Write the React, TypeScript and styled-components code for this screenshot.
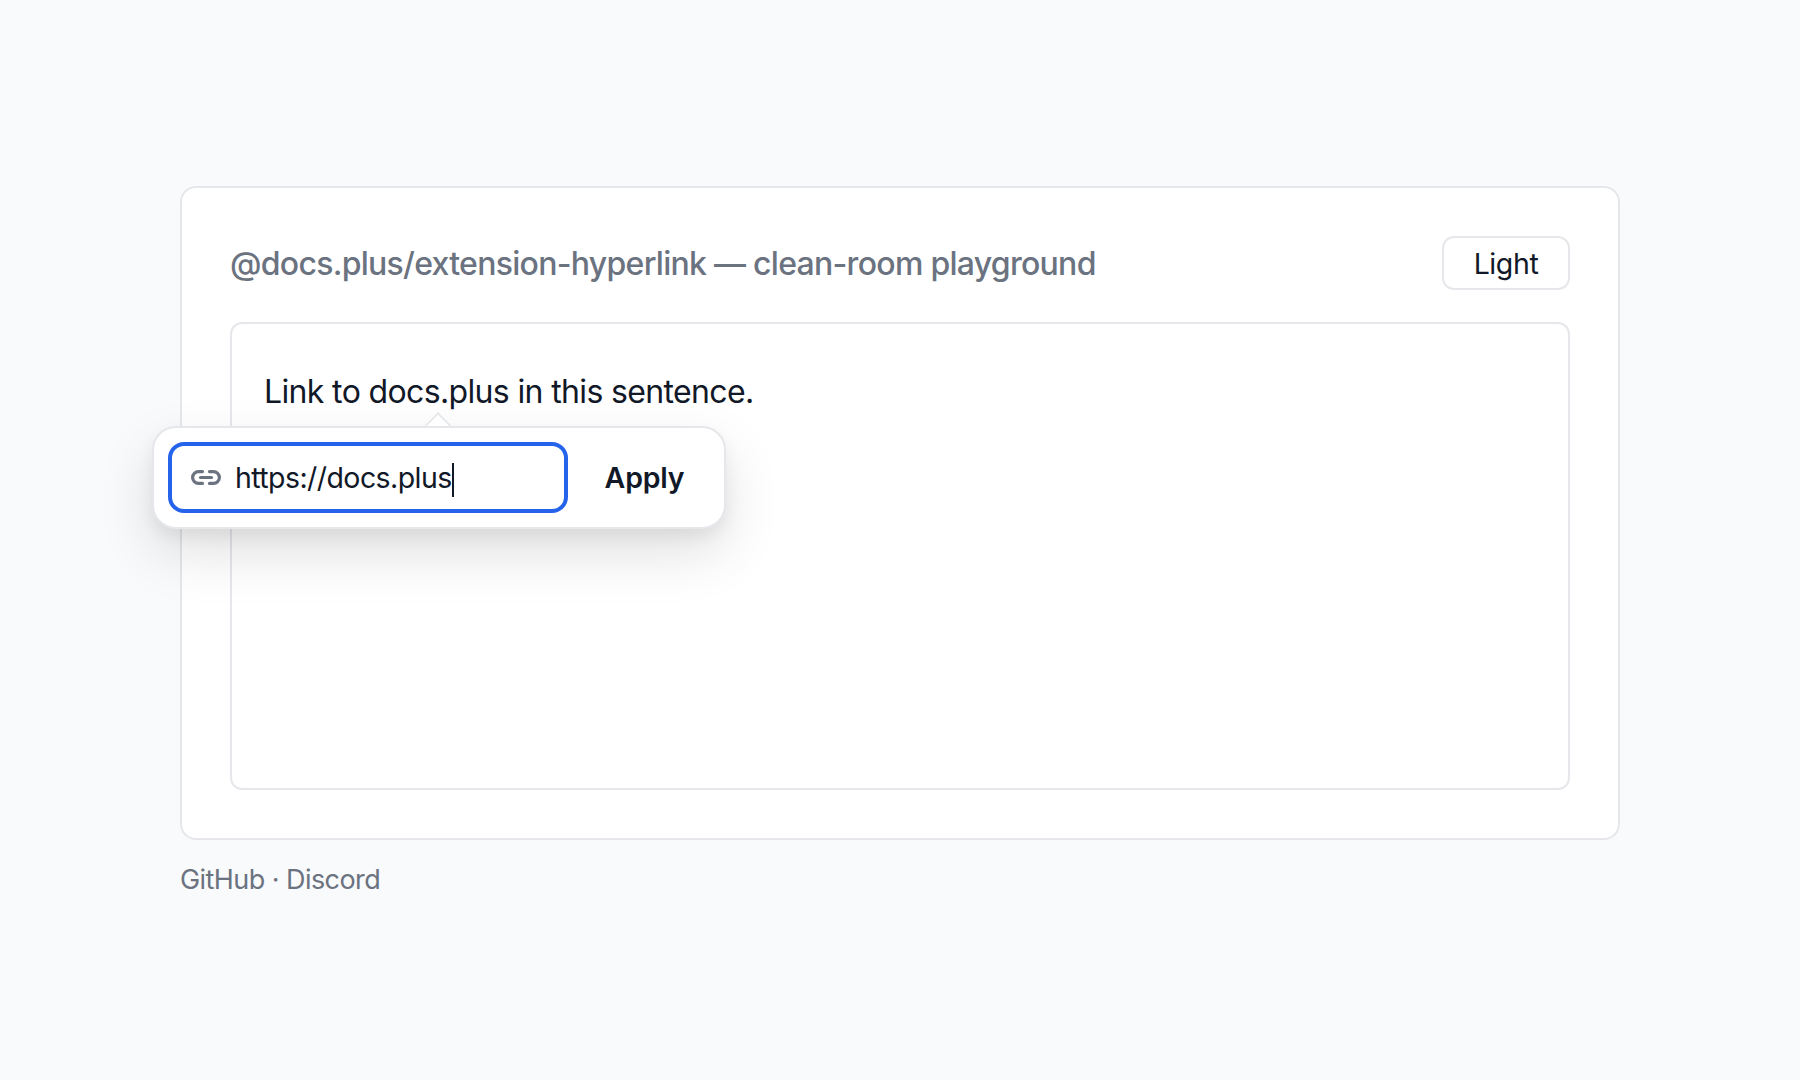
import styled, { createGlobalStyle } from "styled-components";

const GlobalStyle = createGlobalStyle`
  html, body {
    margin: 0;
    padding: 0;
    background: #f9fafb;
    font-family: Inter, "Liberation Sans", sans-serif;
  }
`;

const Page = styled.div`
  min-height: 1080px;
  box-sizing: border-box;
  padding: 186px 180px 0;
`;

const Card = styled.main`
  background: #fff;
  border: 2px solid #e5e7eb;
  border-radius: 16px;
  padding: 48px;
`;

const Header = styled.header`
  display: flex;
  justify-content: space-between;
  align-items: center;
  margin-bottom: 32px;
`;

const Title = styled.h1`
  margin: 1px 0 0;
  font-size: 32px;
  line-height: 40px;
  font-weight: 500;
  letter-spacing: -0.72px;
  color: #6b7280;
`;

const ThemeButton = styled.button`
  width: 128px;
  height: 54px;
  background: #fff;
  border: 2px solid #e5e7eb;
  border-radius: 12px;
  font: 400 28.5px Inter, sans-serif;
  letter-spacing: -0.4px;
  color: #111827;
`;

const Editor = styled.div`
  position: relative;
  height: 468px;
  box-sizing: border-box;
  border: 2px solid #e5e7eb;
  border-radius: 12px;
  padding: 44px 32px;
`;

const Sentence = styled.p`
  margin: 0;
  font-size: 32px;
  line-height: 48px;
  letter-spacing: -0.64px;
  color: #111827;
`;

const Popover = styled.div`
  position: absolute;
  z-index: 1;
  left: -80px;
  top: 102px;
  width: 574px;
  height: 103px;
  box-sizing: border-box;
  display: flex;
  align-items: center;
  padding: 0 14px;
  background: #fff;
  border: 2px solid #e5e7eb;
  border-radius: 24px;
  box-shadow: 0 8px 16px rgba(0, 0, 0, 0.06), 0 24px 56px rgba(0, 0, 0, 0.12);

  /* only the upper half of the square, so the popover border stays unbroken */
  &::before {
    content: "";
    position: absolute;
    left: 274px;
    top: -12px;
    width: 20px;
    height: 20px;
    box-sizing: border-box;
    background: #fff;
    border-top: 2px solid #e5e7eb;
    border-left: 2px solid #e5e7eb;
    clip-path: polygon(0 0, 100% 0, 0 100%);
    transform: rotate(45deg);
  }
`;

const UrlField = styled.div`
  width: 400px;
  height: 71px;
  box-sizing: border-box;
  display: flex;
  align-items: center;
  gap: 14px;
  padding: 0 19px;
  border: 4px solid #2563eb;
  border-radius: 16px;
  color: #6b7280;
`;

const UrlText = styled.span`
  position: relative;
  top: 1px;
  font-size: 28.5px;
  letter-spacing: -0.57px;
  color: #111827;
`;

const Caret = styled.span`
  display: inline-block;
  width: 2px;
  height: 34px;
  background: #111827;
  vertical-align: middle;
`;

const ApplyButton = styled.button`
  flex: 1;
  background: none;
  border: 0;
  padding: 0 0 0 11px;
  font: 600 28.5px Inter, sans-serif;
  letter-spacing: -0.2px;
  color: #111827;
`;

const Footer = styled.footer`
  margin-top: 22px;
  font-size: 27px;
  line-height: 36px;
  letter-spacing: -0.56px;
  color: #6b7280;
`;

const LinkIcon = () => (
  <svg
    width="30"
    height="15"
    viewBox="0 0 30 15"
    fill="none"
    stroke="currentColor"
    strokeWidth="3.2"
    strokeLinecap="round"
    style={{ flexShrink: 0 }}
  >
    <path d="M11.5 1.6H7.5a5.9 5.9 0 0 0 0 11.8H11.5" />
    <path d="M18.5 1.6H22.5a5.9 5.9 0 0 1 0 11.8H18.5" />
    <path d="M9.5 7.5H20.5" />
  </svg>
);

export default function App() {
  return (
    <>
      <GlobalStyle />
      <Page>
        <Card>
          <Header>
            <Title>@docs.plus/extension-hyperlink — clean-room playground</Title>
            <ThemeButton>Light</ThemeButton>
          </Header>
          <Editor>
            <Sentence>Link to docs.plus in this sentence.</Sentence>
            <Popover>
              <UrlField>
                <LinkIcon />
                <UrlText>
                  https://docs.plus
                  <Caret />
                </UrlText>
              </UrlField>
              <ApplyButton>Apply</ApplyButton>
            </Popover>
          </Editor>
        </Card>
        <Footer>GitHub · Discord</Footer>
      </Page>
    </>
  );
}
